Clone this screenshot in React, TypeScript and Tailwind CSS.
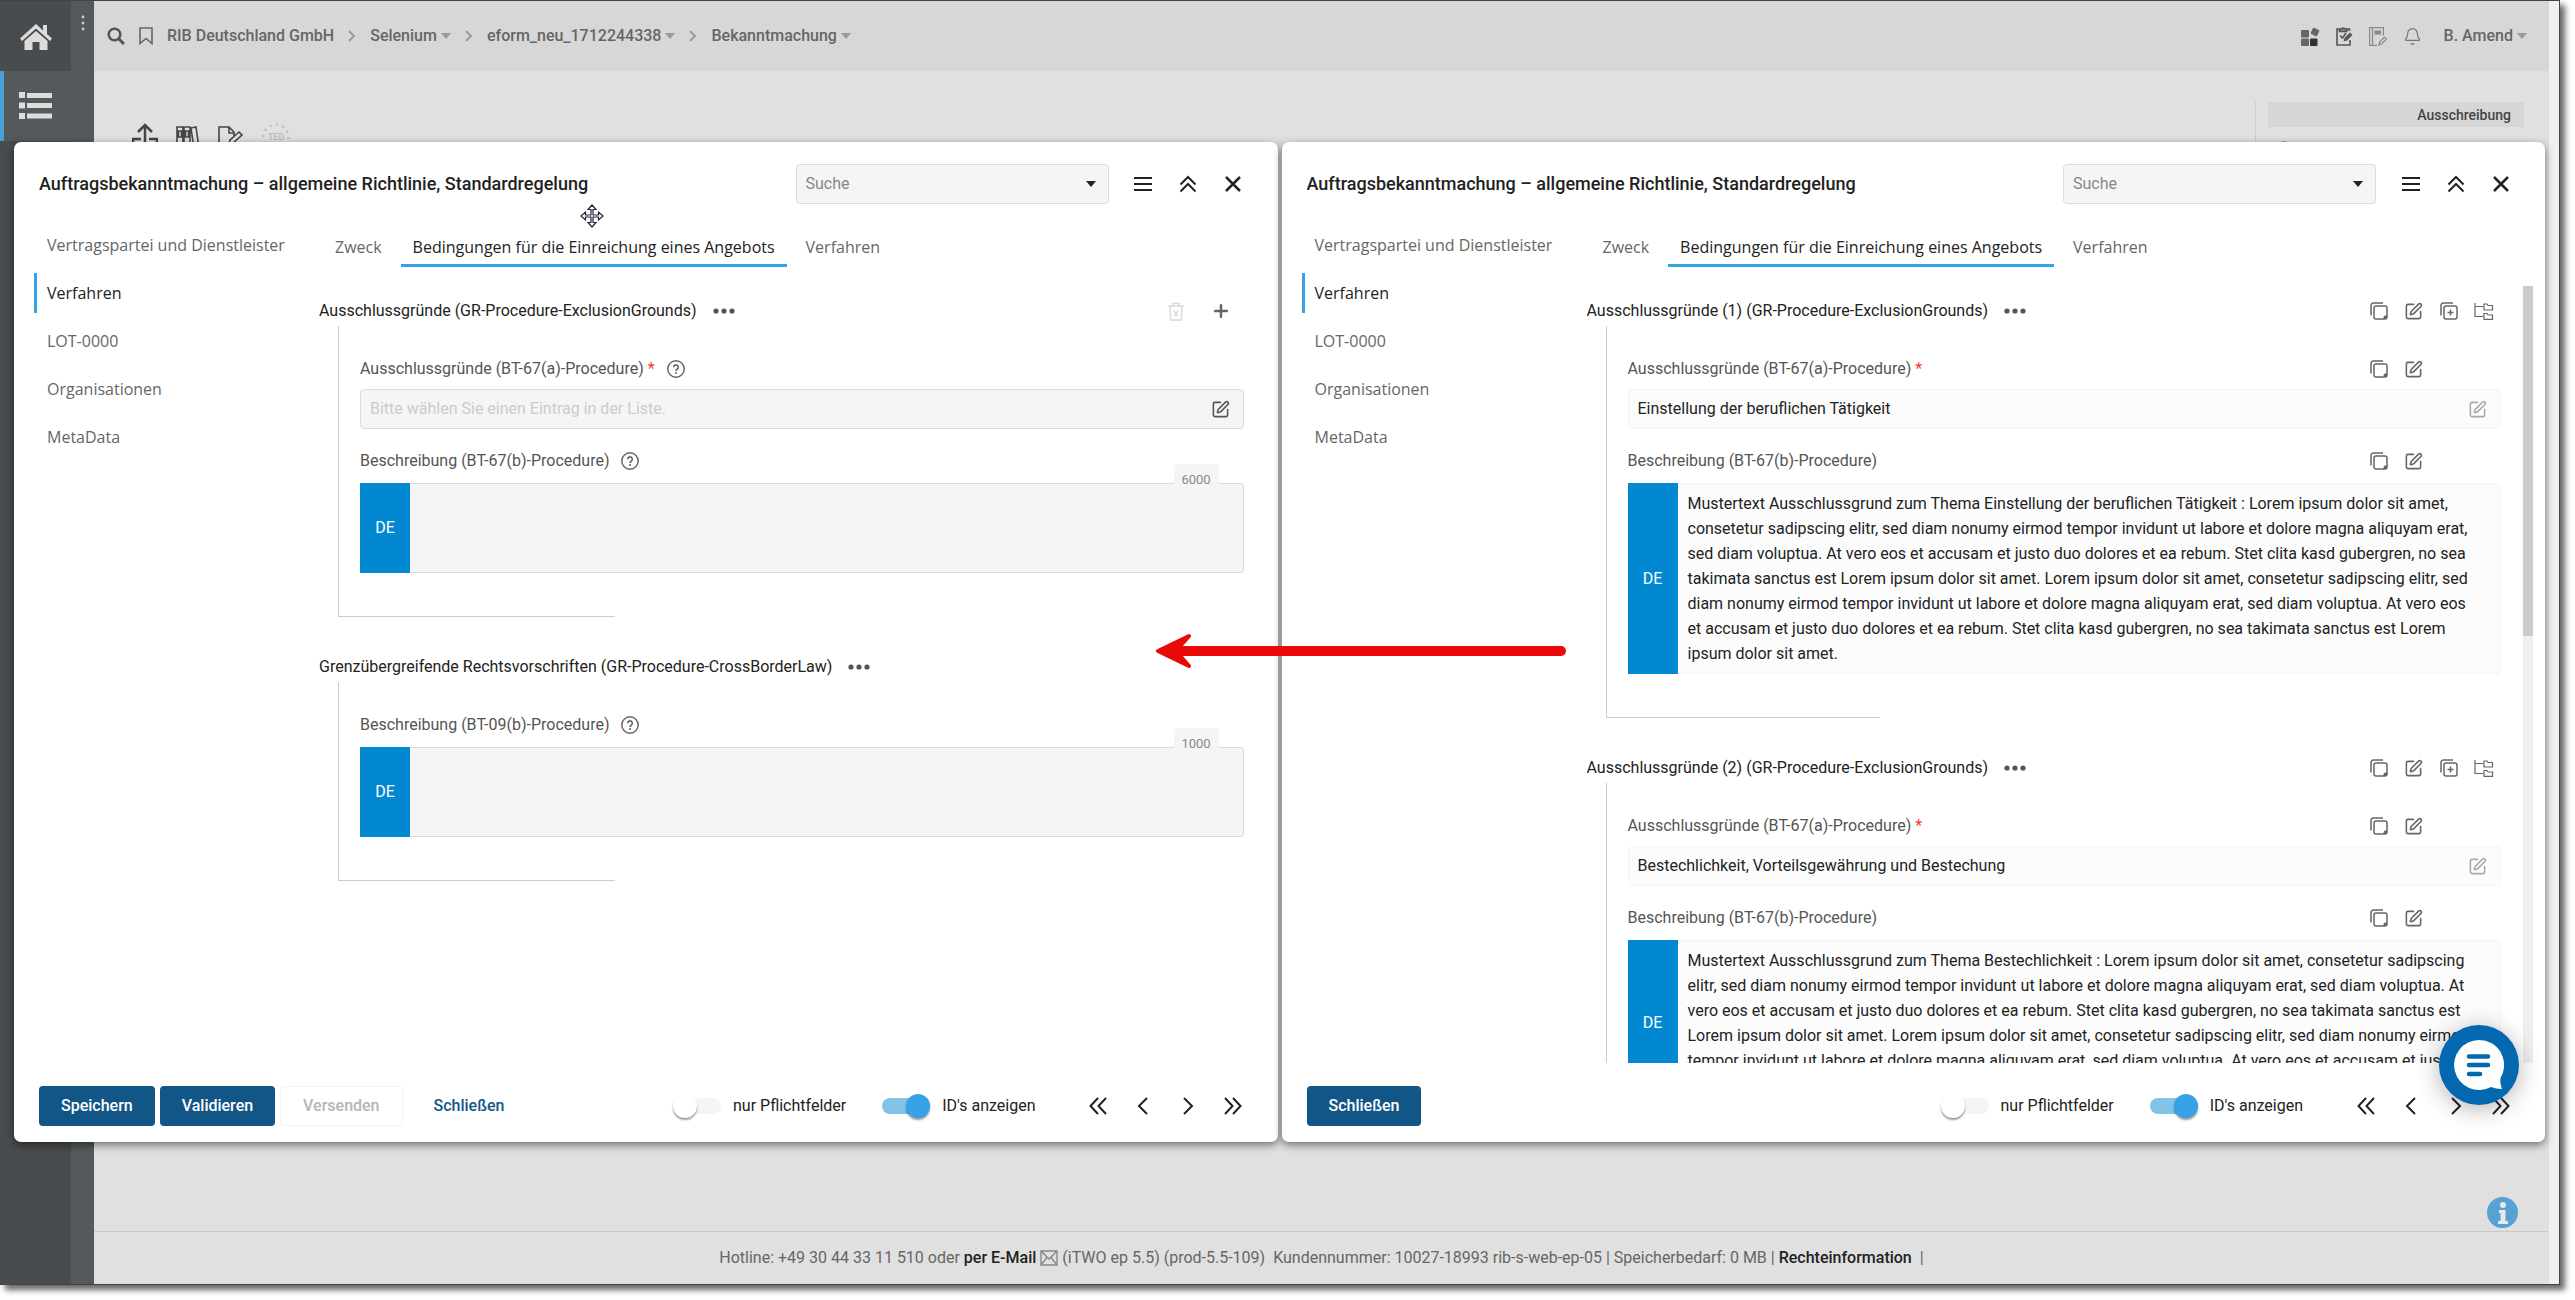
import { useId, useState, type ReactNode } from 'react';
import clsx from 'clsx';
import { Bell, SquarePen, Plus } from 'lucide-react';

const LOREM =
  'Lorem ipsum dolor sit amet, consetetur sadipscing elitr, sed diam nonumy eirmod tempor invidunt ut labore et dolore magna aliquyam erat, sed diam voluptua. At vero eos et accusam et justo duo dolores et ea rebum. Stet clita kasd gubergren, no sea takimata sanctus est Lorem ipsum dolor sit amet.';

const navItems = ['Vertragspartei und Dienstleister', 'Verfahren', 'LOT-0000', 'Organisationen', 'MetaData'];
const tabItems = ['Zweck', 'Bedingungen für die Einreichung eines Angebots', 'Verfahren'];

// ---------- Icons ----------

function HomeIcon() {
  return (
    <svg viewBox="0 0 34 28" className="h-7 w-[34px]" fill="#dcdcdc">
      <path d="M17 2 L24 8.4 V3 H28 V12 L33 16.6 L31 19 L17 6.5 L3 19 L1 16.6 Z" />
      <path d="M17 9 L28.500 19 V28 H20.500 V20 H13.500 V28 H5.500 V19 Z" />
    </svg>
  );
}

function ListIcon() {
  return (
    <svg viewBox="0 0 33 28" className="h-7 w-[33px]" fill="#dcdcdc">
      <path d="M0 0h6v6H0zM8 1h25v5H8zM0 10.500h6v6H0zM8 11h25v5H8zM0 21h6v6H0zM8 21.500h25v5H8z" />
    </svg>
  );
}

function CopyIcon({ plus = false }: { plus?: boolean }) {
  return (
    <svg viewBox="0 0 18 18" className="size-[18px]" fill="none" stroke="currentColor" strokeWidth="1.500">
      <path d="M1 13.500V3.500A2.500 2.500 0 0 1 3.500 1H13" />
      <rect x="4" y="4" width="13" height="13" rx="2" />
      {plus ? (
        <path d="M10.500 7.500v6M7.500 10.500h6" />
      ) : (
        <path d="M17 13.500 h-1.500 a2 2 0 0 0-2 2 V17 h1.500 a2 2 0 0 0 2-2z" fill="currentColor" stroke="none" />
      )}
    </svg>
  );
}

function TreeIcon() {
  return (
    <svg viewBox="0 0 20 18" className="h-[18px] w-5" fill="none" stroke="currentColor" strokeWidth="1.200">
      <path d="M1 1v13.500h8M1 4.500h8" />
      <path d="M10 2h3l1 1.500h4.500V8H10zM10 11.500h3l1 1.500h4.500v4.400H10z" />
    </svg>
  );
}

function TrashIcon() {
  return (
    <svg viewBox="0 0 16 19" className="h-[19px] w-4" fill="none" stroke="#dcdcdc" strokeWidth="1.600">
      <path d="M0 4h16M5 4V1.500h6V4M2 4l.7 14h10.600L14 4M6 9l4 5M10 9l-4 5" />
    </svg>
  );
}

function HelpIcon() {
  return (
    <svg viewBox="0 0 18 18" className="size-[18px] text-[#666]" fill="none" stroke="currentColor">
      <circle cx="9" cy="9" r="8.200" strokeWidth="1.500" />
      <path d="M6.700 7.200a2.300 2.300 0 1 1 3.500 2c-.8.5-1.200.8-1.200 1.700" strokeWidth="1.600" />
      <circle cx="9" cy="13" r="1" fill="currentColor" stroke="none" />
    </svg>
  );
}

function DotsIcon() {
  return (
    <svg viewBox="0 0 22 6" className="h-1.5 w-[22px]" fill="#555">
      <circle cx="3" cy="3" r="2.600" />
      <circle cx="11" cy="3" r="2.600" />
      <circle cx="19" cy="3" r="2.600" />
    </svg>
  );
}

// All the thin line glyphs used in the dialog header and pager
function LineIcon({ d, width = 2 }: { d: string; width?: number }) {
  return (
    <svg viewBox="0 0 18 18" className="size-[18px]" fill="none" stroke="#222" strokeWidth={width}>
      <path d={d} />
    </svg>
  );
}

function Caret({ className }: { className?: string }) {
  return (
    <svg viewBox="0 0 10 6" className={clsx('h-1.5 w-2.5', className)} fill="currentColor">
      <path d="M0 0h10L5 6z" />
    </svg>
  );
}

// ---------- Small controls ----------

function IconButton({ label, wide, children }: { label: string; wide?: boolean; children: ReactNode }) {
  return (
    <button
      aria-label={label}
      className={clsx('flex h-[30px] items-center justify-center text-[#666]', wide ? 'w-[45px]' : 'w-[35px]')}
    >
      {children}
    </button>
  );
}

function Toggle({ label, defaultOn = false }: { label: string; defaultOn?: boolean }) {
  const [on, setOn] = useState(defaultOn);
  return (
    <label className="flex items-center gap-3 text-[#222]">
      <input type="checkbox" className="peer sr-only" checked={on} onChange={(e) => setOn(e.target.checked)} />
      <span
        className={clsx(
          'flex h-4 w-12 items-center rounded-full',
          on ? 'justify-end bg-[#81c4e8]' : 'bg-[#f5f5f5]'
        )}
      >
        <span
          className={clsx(
            'size-6 shrink-0 rounded-full shadow-[0_2px_2px_rgba(0,0,0,0.4)]',
            on ? 'bg-[#36a3e6]' : 'bg-white'
          )}
        />
      </span>
      {label}
    </label>
  );
}

function CopyEdit() {
  return (
    <>
      <IconButton label="Kopieren">
        <CopyIcon />
      </IconButton>
      <IconButton label="Bearbeiten">
        <SquarePen size={19} />
      </IconButton>
    </>
  );
}

// ---------- Form parts ----------

interface LabelRowProps {
  id: string;
  text: string;
  required?: boolean;
  readOnly?: boolean;
}

function LabelRow({ id, text, required, readOnly }: LabelRowProps) {
  return (
    <div className="flex h-6 items-center">
      <label htmlFor={id} className="text-[#555]">
        {text} {required && <span className="text-[#f03a3a]">*</span>}
      </label>
      {readOnly ? (
        <div className="mr-[70px] ml-auto flex">
          <CopyEdit />
        </div>
      ) : (
        <button aria-label="Hilfe" className="ml-3">
          <HelpIcon />
        </button>
      )}
    </div>
  );
}

function ListField({ text, value, readOnly }: { text: string; value?: string; readOnly?: boolean }) {
  const id = useId();
  return (
    <div className="mb-5">
      <LabelRow id={id} text={text} required readOnly={readOnly} />
      <div
        className={clsx(
          'mt-2 flex h-10 items-center rounded-sm border pr-[13px] pl-[9px]',
          readOnly ? 'border-[#f5f5f5] bg-[#fcfcfc]' : 'border-[#dcdcdc] bg-[#f5f5f5]'
        )}
      >
        <input
          id={id}
          readOnly
          defaultValue={value}
          placeholder="Bitte wählen Sie einen Eintrag in der Liste."
          className="min-w-0 flex-1 bg-transparent text-[#222] outline-none placeholder:text-[#ccc]"
        />
        <button aria-label="Auswählen" className={readOnly ? 'text-[#aaa]' : 'text-[#555]'}>
          <SquarePen size={19} />
        </button>
      </div>
    </div>
  );
}

interface TextFieldProps {
  text: string;
  value?: string;
  max?: number;
  readOnly?: boolean;
}

function TextField({ text, value, max, readOnly }: TextFieldProps) {
  const id = useId();
  return (
    <div>
      <LabelRow id={id} text={text} readOnly={readOnly} />
      <div className="relative mt-2.5 flex">
        <span className="flex w-[50px] items-center justify-center bg-[#0288d1] text-white">DE</span>
        <textarea
          id={id}
          readOnly={readOnly}
          defaultValue={value}
          className={clsx(
            'min-h-[90px] flex-1 resize-none overflow-hidden rounded-r-sm border border-l-0 py-[7px] pr-6 pl-2.5 leading-[25px] text-[#222] outline-none field-sizing-content',
            readOnly ? 'border-[#f5f5f5] bg-[#fcfcfc]' : 'border-[#dcdcdc] bg-[#f5f5f5]'
          )}
        />
        {max && (
          <span className="absolute -top-[19px] right-[25px] flex h-[22px] w-[45px] items-end justify-center rounded-t-sm bg-[#f5f5f5] text-[13px] leading-none text-[#888]">
            {max}
          </span>
        )}
      </div>
    </div>
  );
}

function Group({ title, actions, children }: { title: string; actions?: ReactNode; children: ReactNode }) {
  return (
    <section className="mb-[35px]">
      <div className="flex h-[30px] items-center">
        <h3 className="text-[#222]">{title}</h3>
        <button aria-label="Mehr" className="ml-4">
          <DotsIcon />
        </button>
        <div className="ml-auto flex">{actions}</div>
      </div>
      <div className="ml-[19px] border-l border-[#ccc] pt-[31px] pb-[43px] pl-[21px]">{children}</div>
      <div className="ml-[19px] h-px w-[30%] bg-[#ccc]" />
    </section>
  );
}

// ---------- Dialog ----------

interface DialogProps {
  footer: ReactNode;
  scrollbar?: boolean;
  children: ReactNode;
}

function Dialog({ footer, scrollbar, children }: DialogProps) {
  const [nav, setNav] = useState(1);
  const [tab, setTab] = useState(1);

  return (
    <div
      role="dialog"
      className="flex min-w-0 flex-1 flex-col rounded-[7px] bg-white shadow-[0_3px_8px_rgba(0,0,0,0.5)]"
    >
      <header className="flex h-[83px] shrink-0 items-center pr-[22px] pl-[25px]">
        <h2 className="truncate text-lg font-medium text-[#222]">
          Auftragsbekanntmachung – allgemeine Richtlinie, Standardregelung
        </h2>
        <div className="mr-3 ml-auto flex h-10 w-[313px] items-center rounded-sm border border-[#dcdcdc] bg-[#f5f5f5] pr-3 pl-[9px]">
          <input
            aria-label="Suche"
            placeholder="Suche"
            className="min-w-0 flex-1 bg-transparent outline-none placeholder:text-[#888]"
          />
          <button aria-label="Liste öffnen" className="text-[#222]">
            <Caret />
          </button>
        </div>
        <IconButton wide label="Menü">
          <LineIcon d="M0 3h18M0 9h18M0 15h18" />
        </IconButton>
        <IconButton wide label="Einklappen">
          <LineIcon d="M1.500 9.500L9 2l7.500 7.500M1.500 16.500L9 9l7.500 7.500" />
        </IconButton>
        <IconButton wide label="Schließen">
          <LineIcon d="M2 2l14 14M16 2L2 16" width={2.5} />
        </IconButton>
      </header>

      <div className="flex min-h-0 flex-1">
        <nav className="flex w-[305px] shrink-0 flex-col gap-2 pl-5 font-['Open_Sans',sans-serif]">
          {navItems.map((item, i) => (
            <button
              key={item}
              onClick={() => setNav(i)}
              className={clsx(
                'h-10 border-l-[3px] pl-2.5 text-left',
                nav === i ? 'border-[#36a3e6] text-[#222]' : 'border-transparent text-[#666]'
              )}
            >
              {item}
            </button>
          ))}
        </nav>

        <div className="flex min-w-0 flex-1 flex-col">
          <div role="tablist" className="mb-[19px] ml-1 flex gap-[7px] font-['Open_Sans',sans-serif]">
            {tabItems.map((item, i) => (
              <button
                key={item}
                role="tab"
                aria-selected={tab === i}
                onClick={() => setTab(i)}
                className={clsx(
                  'h-[42px] border-b-[3px] px-3 pt-1 whitespace-nowrap',
                  tab === i ? 'border-[#36a3e6] text-[#222]' : 'border-transparent text-[#666]'
                )}
              >
                {item}
              </button>
            ))}
          </div>
          <div className="mr-3 flex min-h-0 flex-1">
            <div className="min-w-0 flex-1 overflow-hidden pt-2.5 pr-[22px]">{children}</div>
            {scrollbar && (
              <div className="w-2.5 bg-[#efefef]">
                <div className="h-[45%] bg-[#ccc]" />
              </div>
            )}
          </div>
        </div>
      </div>

      <footer className="flex h-[79px] shrink-0 items-center pt-[7px] pr-[22px] pl-[25px]">
        <div className="flex gap-[5px] font-medium">{footer}</div>
        <div className="mr-10 ml-auto flex gap-9">
          <Toggle label="nur Pflichtfelder" />
          <Toggle label="ID's anzeigen" defaultOn />
        </div>
        <IconButton wide label="Erste Seite">
          <LineIcon d="M9 1L1.500 9L9 17M17 1L9.500 9L17 17" />
        </IconButton>
        <IconButton wide label="Zurück">
          <LineIcon d="M13 1L5 9L13 17" />
        </IconButton>
        <IconButton wide label="Weiter">
          <LineIcon d="M5 1L13 9L5 17" />
        </IconButton>
        <IconButton wide label="Letzte Seite">
          <LineIcon d="M1 1L8.500 9L1 17M9 1L16.500 9L9 17" />
        </IconButton>
      </footer>
    </div>
  );
}

function PrimaryButton({ children }: { children: ReactNode }) {
  return <button className="h-10 rounded bg-[#125687] px-[22px] text-white">{children}</button>;
}

function ReadOnlyGroup({ no, reason, topic }: { no: number; reason: string; topic: string }) {
  return (
    <Group
      title={`Ausschlussgründe (${no}) (GR-Procedure-ExclusionGrounds)`}
      actions={
        <>
          <CopyEdit />
          <IconButton label="Duplizieren">
            <CopyIcon plus />
          </IconButton>
          <IconButton label="Struktur">
            <TreeIcon />
          </IconButton>
        </>
      }
    >
      <ListField text="Ausschlussgründe (BT-67(a)-Procedure)" value={reason} readOnly />
      <TextField
        text="Beschreibung (BT-67(b)-Procedure)"
        value={`Mustertext Ausschlussgrund zum Thema ${topic} : ${LOREM} ${LOREM}`}
        readOnly
      />
    </Group>
  );
}

// ---------- Page behind the dialogs ----------

function Sidebar() {
  return (
    <aside className="flex w-[94px] shrink-0 bg-[#54595b]">
      <div className="flex w-[71px] flex-col bg-[#494c4e]">
        <a href="#home" aria-label="Start" className="flex h-[70px] items-center justify-center">
          <HomeIcon />
        </a>
        <a
          href="#liste"
          aria-label="Liste"
          className="flex h-[70px] items-center justify-center border-l-4 border-[#4a9fd4] bg-[#54595b] pr-1"
        >
          <ListIcon />
        </a>
      </div>
      <svg viewBox="0 0 4 16" className="mt-3.5 ml-2.5 h-4 w-1" fill="#ccc">
        <circle cx="2" cy="2" r="1.400" />
        <circle cx="2" cy="8" r="1.400" />
        <circle cx="2" cy="14" r="1.400" />
      </svg>
    </aside>
  );
}

function Crumb({ label, menu = true }: { label: string; menu?: boolean }) {
  return (
    <>
      <a href="#crumb">{label}</a>
      {menu && <Caret className="ml-1 text-[#999]" />}
    </>
  );
}

function CrumbArrow() {
  return (
    <svg viewBox="0 0 8 12" className="mx-3.5 h-3 w-2" fill="none" stroke="#999" strokeWidth="1.800">
      <path d="M1 1l5 5-5 5" />
    </svg>
  );
}

function TopBar() {
  return (
    <header className="flex h-[70px] items-center bg-[#d7d7d7] pr-[22px] pl-[13px] font-medium text-[#666]">
      <svg viewBox="0 0 18 18" className="size-[18px]" fill="none" stroke="#555" strokeWidth="2.500">
        <circle cx="7.500" cy="7.500" r="5.800" />
        <path d="M11.500 11.500l5.500 5.500" strokeWidth="3" />
      </svg>
      <svg viewBox="0 0 14 18" className="mr-3.5 ml-3.5 h-[18px] w-3.5" fill="none" stroke="#666" strokeWidth="1.600">
        <path d="M1 1h12v15.500l-6-5-6 5z" />
      </svg>
      <Crumb label="RIB Deutschland GmbH" menu={false} />
      <CrumbArrow />
      <Crumb label="Selenium" />
      <CrumbArrow />
      <Crumb label="eform_neu_1712244338" />
      <CrumbArrow />
      <Crumb label="Bekanntmachung" />

      <div className="ml-auto flex items-center gap-4">
        <svg viewBox="0 0 19 19" className="size-[19px]" fill="#666">
          <rect x="0" y="3" width="8" height="7.500" rx="1" />
          <rect x="0" y="11.500" width="8" height="7.500" rx="1" />
          <rect x="9" y="11.500" width="7.500" height="7.500" rx="1" fill="#333" />
          <rect x="10.500" y="1.500" width="7" height="7" rx="1" transform="rotate(25 14 5)" />
        </svg>
        <svg viewBox="0 0 17 20" className="h-5 w-[17px]" fill="none" stroke="#555" strokeWidth="1.600">
          <path d="M3.500 3H1v16h13v-5M10.500 3H13.500v2" />
          <path d="M3.500 5.500V3h2.200a1.600 1.600 0 0 1 3 0h2.200v2.500z" fill="#888" />
          <path d="M4 9.500l2.500 2.500 3.500-5" />
          <path d="M7.500 15.500l1-3.500L14 6.500l2.500 2.500L11 14.500z" fill="#555" stroke="none" />
        </svg>
        <svg viewBox="0 0 18 19" className="h-[19px] w-[18px]" fill="none" stroke="#8a8a8a" strokeWidth="1.200">
          <path d="M8 18.400H.6V.6h13.800v8M3.500.6v17.800" />
          <rect x="6" y="4" width="5.500" height="3" fill="#8a8a8a" />
          <path d="M10 18l1-3.500 4.500-4.500 2 2-4.500 4.500z" />
        </svg>
        <Bell size={19} strokeWidth={1.500} className="text-[#777]" />
        <button className="ml-1.5 flex items-center gap-1">
          B. Amend <Caret className="text-[#999]" />
        </button>
      </div>
    </header>
  );
}

function Toolbar() {
  return (
    <div className="flex grow items-start pl-[38px]">
      <div className="mt-[52px] flex gap-[18px]">
        <svg viewBox="0 0 26 26" className="size-[26px]" fill="none" stroke="#444" strokeWidth="2.500">
          <path d="M13 2v18M6 9l7-7 7 7M9 16H1v8h24v-8h-8" />
        </svg>
        <svg viewBox="0 0 24 24" className="mt-[3px] size-6" fill="none" stroke="#444" strokeWidth="1.600">
          <path d="M1 1h6v22H1zM8 1h6v22H8zM15 2l5-1 3 21-5 1zM2.500 5h3v6h-3zM9.500 5h3v6h-3z" />
        </svg>
        <svg viewBox="0 0 26 24" className="mt-[3px] h-6 w-[26px]" fill="none" stroke="#444" strokeWidth="1.600">
          <path d="M14 23H1V1h10l5 5v4M11 1v6h5M11 18l1-4 9-8 3 3-9 8z" />
        </svg>
        <svg viewBox="0 0 28 28" className="size-7" fill="none" stroke="#bdbdbd" strokeWidth="2.500">
          <circle cx="14" cy="14" r="12.500" strokeDasharray="2 4.500" />
          <text x="14" y="17" textAnchor="middle" fontSize="9" fontWeight="700" fill="#bdbdbd" stroke="none">
            TED
          </text>
        </svg>
      </div>
      <div className="mt-[31px] mr-[25px] ml-auto border-l border-[#ccc] pl-3">
        <div className="mb-3.5 flex h-[25px] w-64 items-center justify-end bg-[#d6d6d6] pr-[13px] text-sm font-medium text-[#444]">
          Ausschreibung
        </div>
        <div className="ml-3 h-4 w-2 rounded-full bg-[#999]" />
      </div>
    </div>
  );
}

function PageFooter() {
  return (
    <footer className="flex h-[53px] items-center justify-center border-t border-[#c8c8c8] text-[#666]">
      <span>Hotline: +49 30 44 33 11 510 oder&nbsp;</span>
      <a href="#mail" className="font-medium text-[#222]">
        per E-Mail
      </a>
      <svg viewBox="0 0 18 16" className="mx-1 h-4 w-[18px]" fill="none" stroke="#888" strokeWidth="1.400">
        <path d="M1 1h16v14H1zM1 1l8 8 8-8M1 15l6-7.500M17 15l-6-7.500" />
      </svg>
      <span>(iTWO ep 5.5) (prod-5.5-109)</span>
      <span className="ml-2">Kundennummer: 10027-18993 rib-s-web-ep-05 | Speicherbedarf: 0 MB |&nbsp;</span>
      <a href="#recht" className="font-medium text-[#222]">
        Rechteinformation
      </a>
      <span className="ml-2">|</span>
    </footer>
  );
}

export default function App() {
  return (
    <div className="h-screen overflow-hidden bg-white pr-[15px] pb-[15px] font-[Roboto,sans-serif] text-base leading-6">
      <div className="relative flex h-full border-y border-r border-[#444] bg-[#e0e0e0] shadow-[5px_5px_6px_rgba(0,0,0,0.6)]">
        <Sidebar />
        <main className="flex min-w-0 flex-1 flex-col">
          <TopBar />
          <Toolbar />
          <PageFooter />
        </main>
        <div className="w-2.5 bg-[#f0f0f0]" />

        {/* Info bubble */}
        <button
          aria-label="Info"
          className="absolute right-[41px] bottom-[56px] flex size-[31px] items-center justify-center rounded-full bg-[#55a2d3]"
        >
          <svg viewBox="0 0 10 22" className="h-[22px] w-2.5" fill="#e8e8e8">
            <circle cx="5" cy="3" r="3" />
            <path d="M1 8h6.500v11H10v3H0v-3h2.500v-8H1z" />
          </svg>
        </button>

        {/* Dialogs */}
        <div className="absolute top-[141px] right-3.5 bottom-[142px] left-3.5 flex gap-1">
          <Dialog
            footer={
              <>
                <PrimaryButton>Speichern</PrimaryButton>
                <PrimaryButton>Validieren</PrimaryButton>
                <button disabled className="h-10 rounded border border-[#f3f3f3] px-[22px] text-[#b5b5b5]">
                  Versenden
                </button>
                <button className="ml-1 h-10 px-[22px] text-[#125687]">Schließen</button>
              </>
            }
          >
            <Group
              title="Ausschlussgründe (GR-Procedure-ExclusionGrounds)"
              actions={
                <>
                  <IconButton wide label="Löschen">
                    <TrashIcon />
                  </IconButton>
                  <IconButton wide label="Hinzufügen">
                    <Plus size={20} strokeWidth={3} />
                  </IconButton>
                </>
              }
            >
              <ListField text="Ausschlussgründe (BT-67(a)-Procedure)" />
              <TextField text="Beschreibung (BT-67(b)-Procedure)" max={6000} />
            </Group>
            <Group title="Grenzübergreifende Rechtsvorschriften (GR-Procedure-CrossBorderLaw)">
              <TextField text="Beschreibung (BT-09(b)-Procedure)" max={1000} />
            </Group>
          </Dialog>

          <Dialog scrollbar footer={<PrimaryButton>Schließen</PrimaryButton>}>
            <ReadOnlyGroup
              no={1}
              reason="Einstellung der beruflichen Tätigkeit"
              topic="Einstellung der beruflichen Tätigkeit"
            />
            <ReadOnlyGroup
              no={2}
              reason="Bestechlichkeit, Vorteilsgewährung und Bestechung"
              topic="Bestechlichkeit"
            />
          </Dialog>
        </div>

        {/* Move cursor over the dialog title bar */}
        <svg
          viewBox="0 0 24 24"
          className="absolute top-[203px] left-[580px] size-6"
          fill="#fff"
          stroke="#223"
          strokeWidth="1.200"
        >
          <path d="M12 1l4 4.500h-3v5.500h5.500V8l4.500 4-4.500 4v-3H13v5.500h3L12 23l-4-4.500h3V13H5.500v3L1 12l4.500-4v3H11V5.500H8z" />
        </svg>

        {/* Arrow between the two dialogs */}
        <svg viewBox="0 0 410 40" className="absolute top-[630px] left-[1156px] h-10 w-[410px]" stroke="#ea0909">
          <path d="M20 20H405" strokeWidth="10" strokeLinecap="round" fill="none" />
          <path d="M33 5L2 20L33 35L20 20Z" fill="#ea0909" strokeWidth="4" strokeLinejoin="round" />
        </svg>

        {/* Chat bubble */}
        <button
          aria-label="Chat"
          className="absolute right-10 bottom-[179px] flex size-20 items-center justify-center rounded-full bg-[#0468b1] shadow-[0_4px_24px_rgba(0,0,0,0.3)]"
        >
          <svg viewBox="0 0 50 50" className="size-[50px]">
            <path d="M25 0a25 25 0 1 0 12 47c3 1 7 2 11 2-1-3-2-7-1.500-11A25 25 0 0 0 25 0z" fill="#fff" />
            <path d="M15 16.500h19M15 25h19M15 34h11" stroke="#0468b1" strokeWidth="4.500" strokeLinecap="round" />
          </svg>
        </button>
      </div>
    </div>
  );
}
